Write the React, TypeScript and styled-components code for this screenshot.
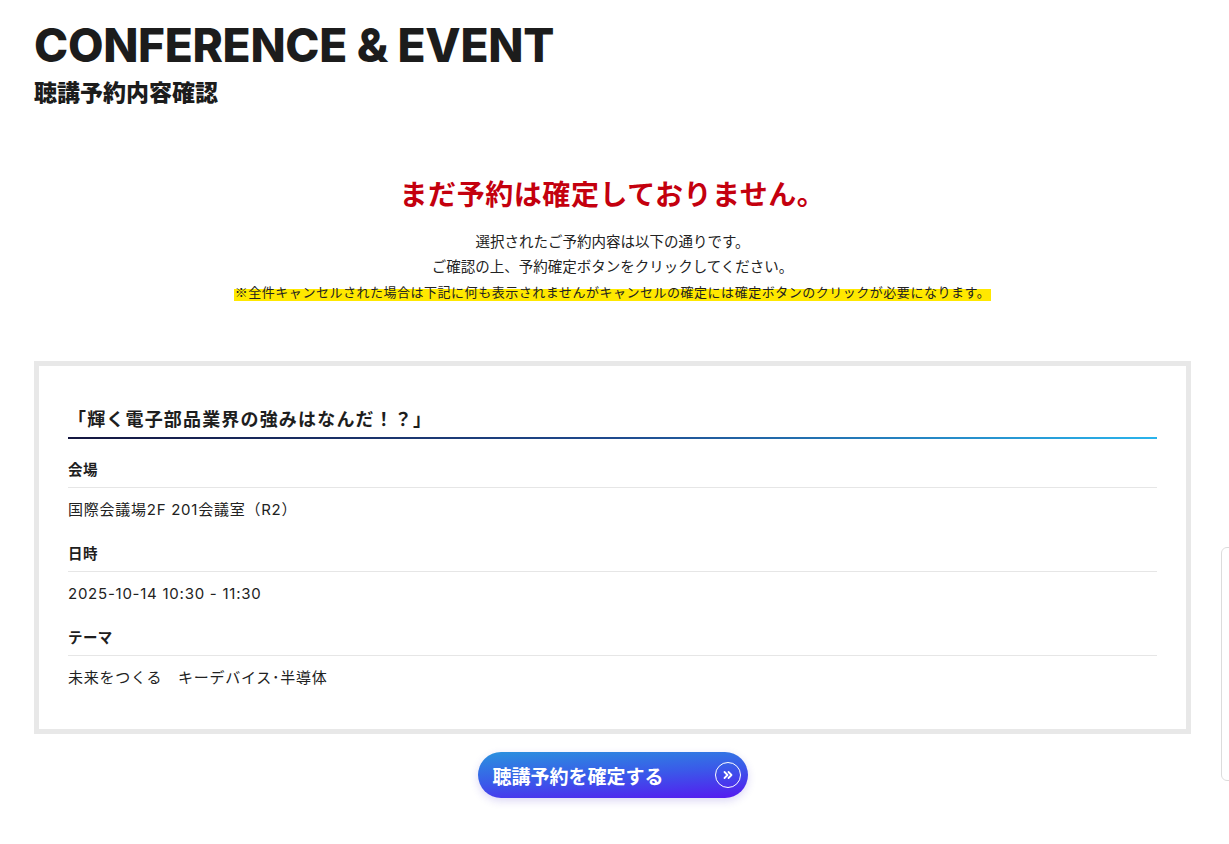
import React from 'react';
import styled, { createGlobalStyle } from 'styled-components';

const GlobalStyle = createGlobalStyle`
  html, body {
    margin: 0;
    padding: 0;
    background: #fff;
  }
  body {
    font-family: "Noto Sans CJK JP", "Noto Sans", sans-serif;
    color: #222;
  }
`;

const Page = styled.div`
  padding: 20px 38px 40px 34px;
`;

const Header = styled.header`
  display: flex;
  flex-direction: column;
  gap: 8px;
`;

const Title = styled.h1`
  margin: 0;
  font-family: "Inter", "Noto Sans", sans-serif;
  font-weight: 800;
  font-size: 46px;
  line-height: 50px;
  letter-spacing: -0.3px;
  color: #1c1c1c;
`;

const Subtitle = styled.h2`
  margin: 0;
  font-family: "Noto Sans CJK JP", sans-serif;
  font-weight: 900;
  font-size: 23px;
  line-height: 26px;
  color: #1c1c1c;
`;

const Notice = styled.section`
  margin-top: 69px;
  text-align: center;
`;

const Alert = styled.p`
  margin: 0 0 15px;
  font-size: 28px;
  line-height: 40px;
  font-weight: 700;
  color: #c4000e;
  letter-spacing: 0.02em;
`;

const Lead = styled.p`
  margin: 0;
  font-size: 14.5px;
  line-height: 25px;
  color: #222;
`;

const Marker = styled.span`
  font-size: 13px;
  letter-spacing: 0.04em;
  background: linear-gradient(transparent 35%, #ffe800 35%);
  padding: 0 1px;
`;

const Card = styled.section`
  margin-top: 57px;
  border: 5px solid #e8e8e8;
  padding: 39px 29px 38px;
`;

const Heading = styled.h3`
  margin: 0;
  padding-bottom: 6px;
  font-size: 18px;
  line-height: 26px;
  font-weight: 700;
  letter-spacing: 0.065em;
  color: #1e1e1e;
  border-bottom: 2px solid transparent;
  border-image: linear-gradient(90deg, #14163f 0%, #1f4a8e 50%, #2ab4ec 100%) 1;
`;

const List = styled.dl`
  margin: 0;
`;

const Label = styled.dt`
  padding: 20px 0 8px;
  font-size: 14.5px;
  line-height: 20px;
  font-weight: 700;
  letter-spacing: 0.03em;
  color: #1e1e1e;
  border-bottom: 1px solid #e6e6e6;
`;

const Value = styled.dd`
  margin: 0;
  padding: 12px 0 3px;
  font-family: "Inter", "Noto Sans CJK JP", sans-serif;
  font-size: 15px;
  line-height: 20px;
  letter-spacing: 0.05em;
  color: #222;
`;

const Actions = styled.div`
  display: flex;
  justify-content: center;
  margin-top: 18px;
`;

const ConfirmButton = styled.button`
  display: flex;
  align-items: center;
  justify-content: space-between;
  width: 270px;
  height: 46px;
  padding: 0 7px 0 15px;
  border: none;
  border-radius: 23px;
  background: linear-gradient(176deg, #2a92de 0%, #3a5ae9 50%, #5618f0 100%);
  box-shadow: 0 3px 8px rgba(60, 40, 200, 0.18);
  color: #fff;
  font-family: "Noto Sans CJK JP", sans-serif;
  font-size: 19px;
  font-weight: 700;
  cursor: pointer;
`;

const Circle = styled.span`
  display: flex;
  align-items: center;
  justify-content: center;
  width: 24px;
  height: 24px;
  border: 1.2px solid #fff;
  border-radius: 50%;
`;

const SideTab = styled.div`
  position: fixed;
  right: -20px;
  top: 547px;
  width: 26px;
  height: 232px;
  border: 1px solid #dcdcdc;
  border-radius: 6px 0 0 6px;
  background: #fff;
`;

const items = [
  { label: '会場', value: '国際会議場2F 201会議室（R2）' },
  { label: '日時', value: '2025-10-14 10:30 - 11:30' },
  { label: 'テーマ', value: '未来をつくる　キーデバイス･半導体' },
];

export default function App() {
  return (
    <>
      <GlobalStyle />
      <Page>
        <Header>
          <Title>CONFERENCE &amp; EVENT</Title>
          <Subtitle>聴講予約内容確認</Subtitle>
        </Header>

        <Notice>
          <Alert>まだ予約は確定しておりません。</Alert>
          <Lead>選択されたご予約内容は以下の通りです。</Lead>
          <Lead>ご確認の上、予約確定ボタンをクリックしてください。</Lead>
          <Lead>
            <Marker>
              ※全件キャンセルされた場合は下記に何も表示されませんがキャンセルの確定には確定ボタンのクリックが必要になります。
            </Marker>
          </Lead>
        </Notice>

        <Card>
          <Heading>「輝く電子部品業界の強みはなんだ！？」</Heading>
          <List>
            {items.map((item) => (
              <React.Fragment key={item.label}>
                <Label>{item.label}</Label>
                <Value>{item.value}</Value>
              </React.Fragment>
            ))}
          </List>
        </Card>

        <Actions>
          <ConfirmButton type="button">
            聴講予約を確定する
            <Circle>
              <svg width="12" height="12" viewBox="0 0 12 12" fill="none" stroke="#fff" strokeWidth="1.8" strokeLinecap="round" strokeLinejoin="round">
                <path d="M2.5 3l3 3-3 3" />
                <path d="M6.5 3l3 3-3 3" />
              </svg>
            </Circle>
          </ConfirmButton>
        </Actions>
      </Page>
      <SideTab />
    </>
  );
}
